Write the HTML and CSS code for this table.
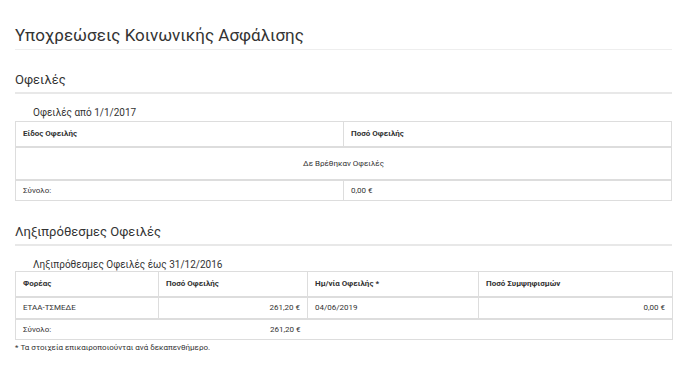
FILE: index.html
```html
<!DOCTYPE html>
<html lang="el">
<head>
<meta charset="utf-8">
<title>Υποχρεώσεις Κοινωνικής Ασφάλισης</title>
<link rel="stylesheet" href="styles.css">
</head>
<body>
<div class="page">
  <h1 class="page-title">Υποχρεώσεις Κοινωνικής Ασφάλισης</h1>

  <h2 class="section-title">Οφειλές</h2>
  <div class="caption">Οφειλές από 1/1/2017</div>
  <table class="grid">
    <colgroup><col class="c-half"><col class="c-half"></colgroup>
    <thead>
      <tr class="head"><th>Είδος Οφειλής</th><th>Ποσό Οφειλής</th></tr>
    </thead>
    <tbody>
      <tr class="empty"><td colspan="2" class="center">Δε Βρέθηκαν Οφειλές</td></tr>
    </tbody>
    <tbody class="foot">
      <tr><td>Σύνολο:</td><td>0,00 €</td></tr>
    </tbody>
  </table>

  <h2 class="section-title second">Ληξιπρόθεσμες Οφειλές</h2>
  <div class="caption caption-2">Ληξιπρόθεσμες Οφειλές έως 31/12/2016</div>
  <table class="grid">
    <colgroup><col class="c1"><col class="c2"><col class="c3"><col class="c4"></colgroup>
    <thead>
      <tr class="head"><th>Φορέας</th><th>Ποσό Οφειλής</th><th>Ημ/νία Οφειλής *</th><th>Ποσό Συμψηφισμών</th></tr>
    </thead>
    <tbody>
      <tr class="row"><td>ΕΤΑΑ-ΤΣΜΕΔΕ</td><td class="right">261,20 €</td><td>04/06/2019</td><td class="right">0,00 €</td></tr>
    </tbody>
    <tbody class="foot open">
      <tr><td>Σύνολο:</td><td class="right">261,20 €</td><td></td><td></td></tr>
    </tbody>
  </table>
  <p class="note">* Τα στοιχεία επικαιροποιούνται ανά δεκαπενθήμερο.</p>
</div>
</body>
</html>
```

FILE: styles.css
```css
html, body {
  margin: 0;
  padding: 0;
  background: #fff;
}
body {
  font-family: Roboto, "Liberation Sans", Arial, sans-serif;
  color: #333;
}
.page {
  padding: 23px 16px 0 15px;
}
.page-title {
  margin: 0;
  font-size: 17px;
  font-weight: 400;
  line-height: 24px;
  padding-bottom: 2px;
  border-bottom: 1px solid #eee;
}
.section-title {
  margin: 20px 0 0;
  font-size: 13px;
  font-weight: 400;
  line-height: 20px;
  padding-bottom: 2px;
  border-bottom: 2px solid #e8e8e8;
}
.section-title.second {
  margin-top: 21px;
}
.caption {
  margin: 13px 0 2px 18px;
  font-size: 10px;
  line-height: 12px;
}
.caption-2 {
  margin-bottom: 0;
}
.grid {
  width: 657px;
  border-collapse: collapse;
  table-layout: fixed;
  font-size: 8px;
  border: 1px solid #ddd;
}
.c-half { width: 50%; }
.c1 { width: 143px; }
.c2 { width: 149px; }
.c3 { width: 171px; }
.c4 { width: 194px; }
.grid th, .grid td {
  border: 1px solid #ddd;
  padding: 0 7px;
  text-align: left;
  vertical-align: middle;
  line-height: 10px;
}
.grid th {
  font-weight: 700;
  border-bottom: 2px solid #ddd;
}
.grid tr.head th { height: 24px; }
.grid tr.empty td { height: 31px; }
.grid tr.row td { height: 20px; }
.grid tbody.foot tr td {
  border-top: 2px solid #ddd;
  height: 19px;
}
.grid tbody.foot.open td {
  border-left: none;
  border-right: none;
}
.grid tbody.foot.open td:first-child { border-left: 1px solid #ddd; }
.grid tbody.foot.open td:last-child { border-right: 1px solid #ddd; }
.center { text-align: center !important; }
.right { text-align: right !important; }
.note {
  margin: 3px 0 0;
  font-size: 8px;
  line-height: 10px;
}
```
